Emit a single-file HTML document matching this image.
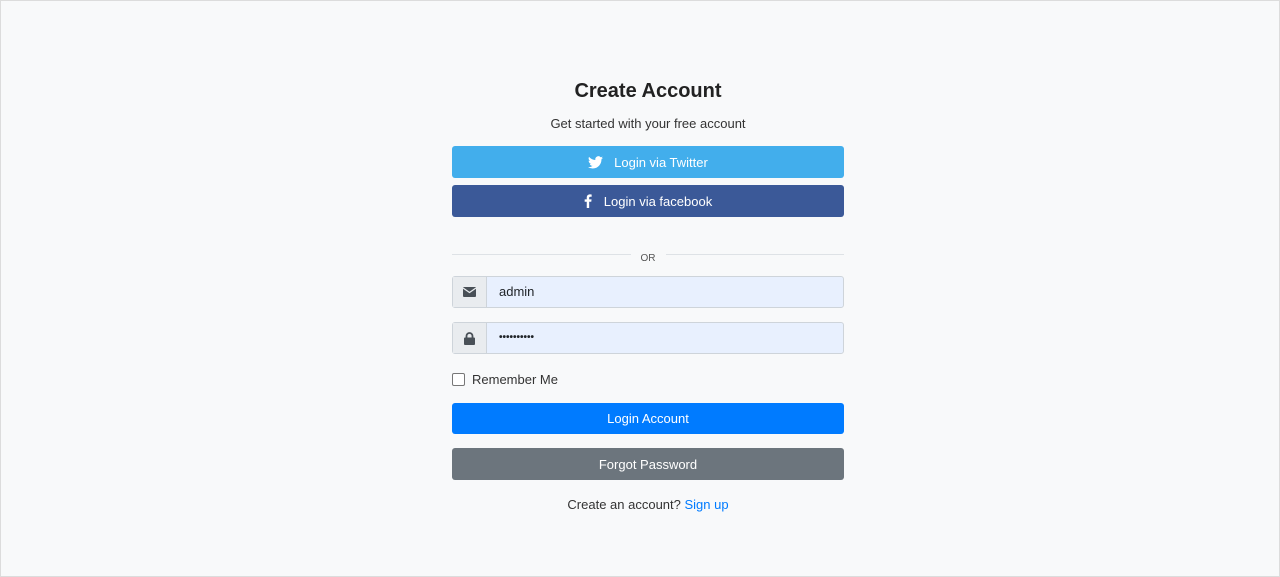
<!DOCTYPE html>
<html><head><style>
*{box-sizing:border-box;margin:0;padding:0}
body{width:1280px;height:577px;background:#f8f9fa;font-family:"Liberation Sans",sans-serif;color:#212529;position:relative;overflow:hidden;border:1px solid #dcdcdc}
.a{position:absolute;left:451px;width:392px}
.c{text-align:center}
.btn{border-radius:3px;color:#fff;font-size:13px;display:flex;align-items:center;justify-content:center;height:32px}
.inp{height:32px;border:1px solid #ced4da;border-radius:3px;display:flex;background:#e8f0fe}
.ic{width:34px;background:#e9ecef;border-right:1px solid #ced4da;display:flex;align-items:center;justify-content:center}
.inp span.t{padding-left:12px;font-size:13px;line-height:30px}
</style></head><body>
<div class="a c" style="top:79px;font-size:20px;font-weight:bold;color:#222">Create Account</div>
<div class="a c" style="top:115px;font-size:13px;color:#333">Get started with your free account</div>
<div class="a btn" style="top:145px;background:#42aeec">
<svg width="15" height="13" viewBox="0 0 24 20" style="margin-right:11px"><path fill="#fff" d="M24 2.4a10 10 0 0 1-2.8.8A5 5 0 0 0 23.3.4a10 10 0 0 1-3.1 1.2A4.9 4.9 0 0 0 11.8 6 14 14 0 0 1 1.7.9a4.9 4.9 0 0 0 1.5 6.6A4.9 4.9 0 0 1 1 6.9a4.9 4.9 0 0 0 3.9 4.9 5 5 0 0 1-2.2.1 4.9 4.9 0 0 0 4.6 3.4A9.9 9.9 0 0 1 0 17.3 14 14 0 0 0 7.5 19.5c9 0 14-7.5 14-14v-.6A10 10 0 0 0 24 2.4z"/></svg>Login via Twitter</div>
<div class="a btn" style="top:184px;background:#3b5998">
<svg width="8" height="14" viewBox="0 0 10 18" style="margin-right:12px"><path fill="#fff" d="M6.5 18V10h2.7l.4-3.1H6.5V5c0-.9.3-1.5 1.6-1.5h1.6V.7C9.4.6 8.5.5 7.4.5 5 .5 3.4 2 3.4 4.6v2.3H.7V10h2.7v8z"/></svg>Login via facebook</div>
<div class="a" style="top:253px;height:1px;background:#dee2e6"></div>
<div class="a c" style="top:247px"><span style="background:#f8f9fa;padding:0 10px;font-size:10px;color:#555">OR</span></div>
<div class="a inp" style="top:275px"><div class="ic"><svg width="13" height="10" viewBox="0 0 13 10"><rect width="13" height="10" rx="1" fill="#495057"/><path d="M0 1l6.5 4.5L13 1" stroke="#e9ecef" stroke-width="1.3" fill="none"/></svg></div><span class="t">admin</span></div>
<div class="a inp" style="top:321px"><div class="ic"><svg width="11" height="13" viewBox="0 0 11 13"><path d="M2.5 6V4a3 3 0 0 1 6 0v2" stroke="#495057" stroke-width="1.8" fill="none"/><rect y="5.5" width="11" height="7.5" rx="1" fill="#495057"/></svg></div><span class="t" style="font-weight:bold;font-size:10px;letter-spacing:0">••••••••••</span></div>
<div class="a" style="top:371px;display:flex;align-items:center;font-size:13px;color:#333"><span style="width:13px;height:13px;border:1px solid #777;border-radius:2px;background:#fff;margin-right:7px"></span>Remember Me</div>
<div class="a btn" style="top:402px;background:#007bff;height:31px">Login Account</div>
<div class="a btn" style="top:447px;background:#6c757d">Forgot Password</div>
<div class="a c" style="top:496px;font-size:13px;color:#333">Create an account? <span style="color:#007bff">Sign up</span></div>
</body></html>
